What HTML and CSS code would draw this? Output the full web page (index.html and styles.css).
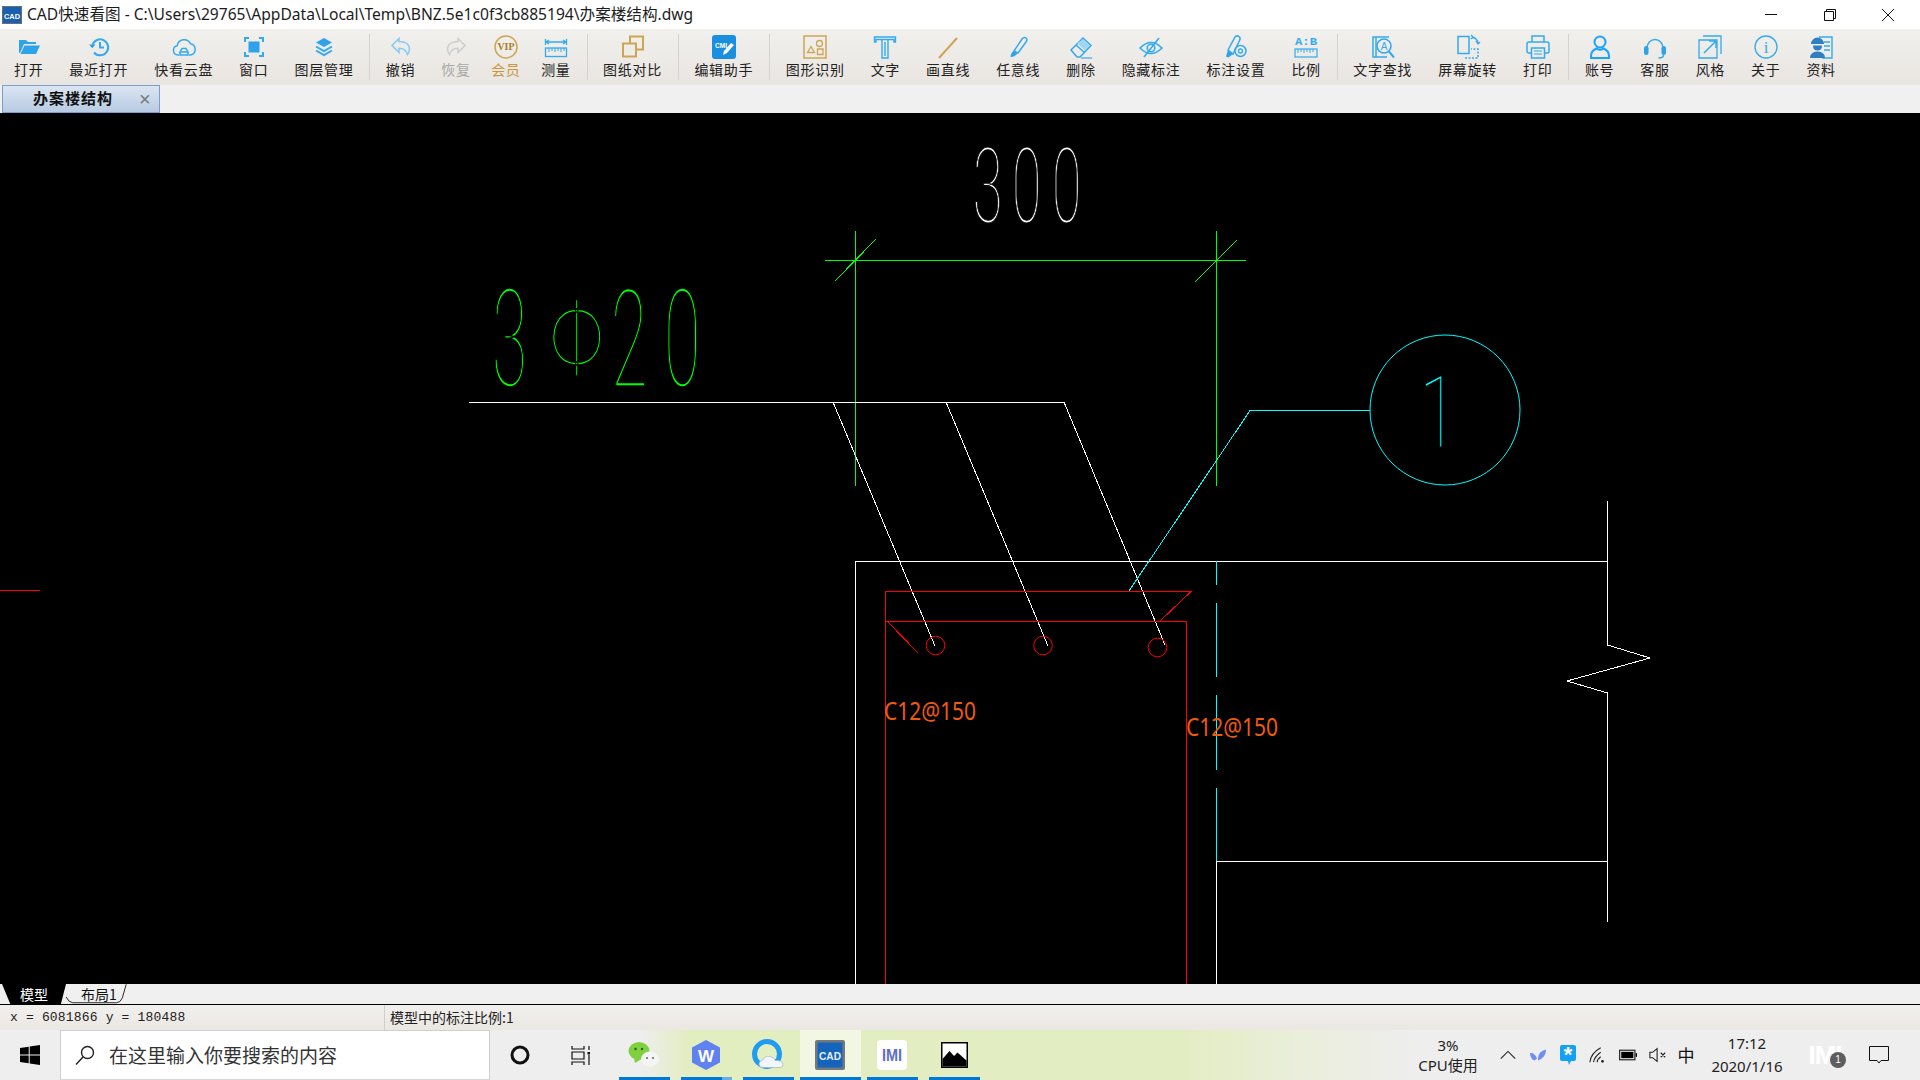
FILE: index.html
```html
<!DOCTYPE html>
<html lang="zh">
<head>
<meta charset="utf-8">
<title>CAD快速看图</title>
<link rel="stylesheet" href="styles.css">
</head>
<body>
<div class="app">
  <header class="titlebar">
    <svg class="app-icon" viewBox="0 0 20 18"><rect x="0.5" y="0.5" width="19" height="17" fill="#1b5fae" stroke="#66707c"/><text x="10" y="12.5" class="app-icon-t" textLength="16" lengthAdjust="spacingAndGlyphs">CAD</text></svg>
    <span class="title-text">CAD快速看图 - C:\Users\29765\AppData\Local\Temp\BNZ.5e1c0f3cb885194\办案楼结构.dwg</span>
    <div class="win-btns">
      <svg class="win-btn" viewBox="0 0 14 14"><path d="M1 6.5h12"/></svg>
      <svg class="win-btn" viewBox="0 0 14 14"><path d="M1.5 3.5h9v9h-9z M3.5 3.5v-2h9v9h-2"/></svg>
      <svg class="win-btn" viewBox="0 0 14 14"><path d="M1 1l12 12M13 1L1 13"/></svg>
    </div>
  </header>

  <nav class="toolbar">
    <div class="tool"><svg class="ic" viewBox="0 0 24 24"><path class="fb" d="M2 5h7l2 2h8v2H7L3 18H2z M7.5 10.5H23l-4 8.5H3.5z"/></svg><span>打开</span></div>
    <div class="tool"><svg class="ic" viewBox="0 0 24 24"><path d="M5.5 10A8 8 0 1 1 7 17.5 M13 7v5.5h4" stroke-width="2"/><path class="fb" d="M2 9.5h6.5l-3.2 3.8z"/></svg><span>最近打开</span></div>
    <div class="tool"><svg class="ic" viewBox="0 0 24 24"><path d="M7 20H6a4.7 4.7 0 0 1-.8-9.3A7 7 0 0 1 18.5 8.8 5.7 5.7 0 0 1 18.5 20H17 M8 20v-3l2-3.5h4l2 3.5v3z M8 17h8"/></svg><span>快看云盘</span></div>
    <div class="tool"><svg class="ic" viewBox="0 0 24 24"><path d="M3 7V3h4 M17 3h4v4 M21 17v4h-4 M7 21H3v-4" stroke-width="2"/><rect class="fb" x="6.5" y="6.5" width="11" height="11"/></svg><span>窗口</span></div>
    <div class="tool"><svg class="ic" viewBox="0 0 24 24"><path class="fb" d="M12 3l8 4.5-8 4.5-8-4.5z"/><path d="M4 11.5l8 4.5 8-4.5 M4 15.5l8 4.5 8-4.5" stroke-width="2"/></svg><span>图层管理</span></div>
    <i class="sep"></i>
    <div class="tool"><svg class="ic pale" viewBox="0 0 24 24"><path d="M10 3.5L3 10.5l7 7v-4.3c4 0 7 1 8.5 6.3 1.200-1.500 2-3.500 2-5.500 0-4.500-4-7.500-10.500-7.500z"/></svg><span>撤销</span></div>
    <div class="tool off"><svg class="ic grey" viewBox="0 0 24 24"><path d="M14 3.500L21 10.500l-7 7v-4.300c-4 0-7 1-8.500 6.300-1.200-1.500-2-3.500-2-5.500 0-4.500 4-7.500 10.500-7.500z"/></svg><span>恢复</span></div>
    <div class="tool vip"><svg class="ic gold" viewBox="0 0 24 24"><circle cx="12" cy="12" r="11" stroke-width="1.500"/><text x="12" y="15" class="vip-t" textLength="17" lengthAdjust="spacingAndGlyphs">VIP</text></svg><span>会员</span></div>
    <div class="tool after-vip"><svg class="ic" viewBox="0 0 24 24"><path d="M1.500 4v6 M22.500 4v6 M2 7h20 M5 5l-3 2 3 2 M19 5l3 2-3 2" stroke-width="1.300"/><rect x="1.500" y="13" width="21" height="8.500" stroke-width="1.300"/><path d="M5 13v4 M8 13v3 M11 13v4 M14 13v3 M17 13v4 M20 13v3" stroke-width="1"/></svg><span>测量</span></div>
    <i class="sep"></i>
    <div class="tool"><svg class="ic gold" viewBox="0 0 24 24"><rect x="9" y="1.500" width="13" height="13" stroke-width="2"/><rect class="mask" x="2" y="8.500" width="13" height="13" stroke-width="2"/></svg><span>图纸对比</span></div>
    <i class="sep"></i>
    <div class="tool"><svg class="ic" viewBox="0 0 24 24"><rect class="fb2" x="0" y="0" width="24" height="24" rx="3"/><text x="9" y="13" class="cmi-t" textLength="12" lengthAdjust="spacingAndGlyphs">CMI</text><path class="pen" d="M11 20l1-4 7-8 3 2-7 8z"/></svg><span>编辑助手</span></div>
    <i class="sep"></i>
    <div class="tool"><svg class="ic gold" viewBox="0 0 24 24"><rect x="1" y="1" width="22" height="22" stroke-width="1.500"/><path d="M4.500 17.500l3.500-6 3.500 6z M14.500 14h5.500v5.500h-5.500z" stroke-width="1.300"/><circle cx="16.500" cy="8.500" r="3" stroke-width="1.300"/></svg><span>图形识别</span></div>
    <div class="tool"><svg class="ic" viewBox="0 0 24 24"><path d="M1.500 2h21v5h-1.500v-2.500h-18v2.500h-1.500z M9 5v18h6v-18 M12 7v14" stroke-width="1.400"/></svg><span>文字</span></div>
    <div class="tool"><svg class="ic gold" viewBox="0 0 24 24"><path d="M3 23L21 3" stroke-width="2"/></svg><span>画直线</span></div>
    <div class="tool"><svg class="ic" viewBox="0 0 24 24"><path d="M8 16L16 4q2-2.500 4-1t0 4l-8 11z" stroke-width="1.500"/><path class="fb" d="M8 16q-3 1-3.500 6 4 0 7-3.500z"/></svg><span>任意线</span></div>
    <div class="tool"><svg class="ic" viewBox="0 0 24 24"><path d="M2 15L14 3l8 7.500L11 22H8z M7 10l9 8" stroke-width="1.500"/><path class="fb3" d="M14 4.500l6.500 6-4.500 5-8-7.500z"/><path d="M12 23h11" stroke-width="1.200"/></svg><span>删除</span></div>
    <div class="tool"><svg class="ic" viewBox="0 0 24 24"><path d="M1 13q11-11 22 0-11 11-22 0z" stroke-width="1.600"/><circle cx="12" cy="13" r="3.800" stroke-width="1.600"/><path d="M5 22L20 3" stroke-width="1.600"/></svg><span>隐藏标注</span></div>
    <div class="tool"><svg class="ic" viewBox="0 0 24 24"><path d="M4 15L11 2q2-2 4-.5t.5 4L9 19z" stroke-width="1.500"/><path class="fb" d="M4 15l5 4-4.500 3.500-2.500-1z"/><circle cx="16.500" cy="16" r="5.500" stroke-width="1.500"/><circle cx="16.500" cy="16" r="2" stroke-width="1.300"/></svg><span>标注设置</span></div>
    <div class="tool"><svg class="ic" viewBox="0 0 24 24"><text x="12" y="10" class="ab-t" textLength="22" lengthAdjust="spacingAndGlyphs">A:B</text><rect x="1" y="14" width="22" height="8" stroke-width="1.200"/><path d="M4 14v4 M7 14v3 M10 14v4 M13 14v3 M16 14v4 M19 14v3" stroke-width="1"/></svg><span>比例</span></div>
    <i class="sep"></i>
    <div class="tool"><svg class="ic" viewBox="0 0 24 24"><path d="M18 2H2v20h14 M5 2v20" stroke-width="1.500"/><circle class="mask" cx="13" cy="11" r="7" stroke-width="1.600"/><text x="13" y="14.500" class="a-t">A</text><path d="M18 16.500l5 6" stroke-width="2"/></svg><span>文字查找</span></div>
    <div class="tool"><svg class="ic" viewBox="0 0 24 24"><rect x="2" y="1.500" width="11" height="17" stroke-width="1.500"/><path d="M9 23h13v-9h-7" stroke-width="1.500" stroke-dasharray="2 1.500"/><path d="M16 2q5 1 6 6 M15 0l2 2-2 2 M20 6l2 3 2-2" stroke-width="1.300"/></svg><span>屏幕旋转</span></div>
    <div class="tool"><svg class="ic" viewBox="0 0 24 24"><path d="M6 7V1h12v6" stroke-width="1.500"/><path d="M5 18H3q-2 0-2-2V9q0-2 2-2h18q2 0 2 2v7q0 2-2 2h-2" stroke-width="1.500"/><rect x="5.500" y="13" width="13" height="10" stroke-width="1.500"/><path d="M8 16h8 M8 19h8" stroke-width="1.200"/></svg><span>打印</span></div>
    <i class="sep"></i>
    <div class="tool"><svg class="ic bright" viewBox="0 0 24 24"><circle cx="12" cy="7" r="5.500" stroke-width="2"/><path d="M3 23v-2c0-4 3-6.500 5.500-7.500 2 1.500 5 1.500 7 0 2.500 1 5.500 3.500 5.500 7.500v2z" stroke-width="2"/></svg><span>账号</span></div>
    <div class="tool"><svg class="ic" viewBox="0 0 24 24"><path d="M4 13a8 8.500 0 0 1 16 0" stroke-width="1.500"/><rect class="fb" x="1" y="11" width="4.500" height="9" rx="2.200"/><rect class="fb" x="18.500" y="11" width="4.500" height="9" rx="2.200"/><path d="M20.500 20q0 3-5 3" stroke-width="1.500"/></svg><span>客服</span></div>
    <div class="tool"><svg class="ic" viewBox="0 0 24 24"><path d="M5 1h18v18 M1 5h18v18H1z" stroke-width="1.300"/><path d="M6 18L18 6 M11 6h7v7" stroke-width="1.500"/></svg><span>风格</span></div>
    <div class="tool"><svg class="ic" viewBox="0 0 24 24"><circle cx="12" cy="12" r="11" stroke-width="1.300"/><text x="12" y="18" class="i-t">i</text></svg><span>关于</span></div>
    <div class="tool"><svg class="ic" viewBox="0 0 24 24"><path d="M10 2h13v21H13" stroke-width="1.400"/><path d="M15 7h6 M15 11h6 M15 15h6" stroke-width="1.400"/><path class="fb4" d="M2 9a6.500 6.500 0 0 1 13 0z M4 10.500h9q0 5-4.500 5T4 10.500z M1 23q0-6 7.500-6.500Q16 17 16 23z"/></svg><span>资料</span></div>
  </nav>

  <div class="tabstrip">
    <div class="doc-tab"><span class="doc-tab-name">办案楼结构</span><span class="doc-tab-x">×</span></div>
  </div>

  <main class="canvas">
    <svg class="drawing" viewBox="0 113 1920 871">
      <g class="c-green">
        <path d="M825 260.500H1246 M855.500 231V486 M1216.500 231V486 M876 239L835 281 M1237 240L1195 282"/>
      </g>
      <g class="c-white">
        <path d="M469 402.500H1064 M833 402L935 646 M946 402L1048 646 M1064 402L1165 645"/>
        <path d="M1607.500 561.500H855.500V984 M1607.500 501V645L1650 658L1567 681L1607.500 693V922 M1216.500 861.500H1607.500 M1216.500 861V984"/>
      </g>
      <g class="c-red">
        <path d="M885.500 984V591.500H1191L1160 621 M885.500 621.500H1186.500V984 M887 621L918 653 M0 590.500H40"/>
        <circle cx="935.500" cy="645.500" r="9.300"/><circle cx="1043" cy="645.500" r="9.300"/><circle cx="1157.500" cy="647.500" r="9.300"/>
      </g>
      <g class="c-cyan">
        <path d="M1129 591L1250 410.500H1370 M1216.500 561V585 M1216.500 603V677 M1216.500 695V770 M1216.500 788V861"/>
        <circle cx="1445" cy="410" r="75"/>
      </g>
      <text class="cad t-white" transform="translate(973 222) scale(.52 1)" x="0 75 152" font-size="103">300</text>
      <text class="cad big t-green" transform="translate(492 386) scale(.47 1)" font-size="136">3</text>
      <text class="cad big t-green" transform="translate(549 376) scale(.72 1)" font-size="108">Φ</text>
      <text class="cad big t-green" transform="translate(611 386) scale(.49 1)" x="0 108" font-size="136">20</text>
      <text class="cad t-cyan" transform="translate(1419 447) scale(.7 1)" font-size="101">1</text>
      <text class="note" x="884" y="720" font-size="26" textLength="92" lengthAdjust="spacingAndGlyphs">C12@150</text>
      <text class="note" x="1186" y="736" font-size="26" textLength="92" lengthAdjust="spacingAndGlyphs">C12@150</text>
    </svg>
  </main>

  <div class="sheets">
    <div class="sheet sheet-on"><span>模型</span></div>
    <div class="sheet sheet-off">
      <svg class="sheet-edge" viewBox="0 0 70 20"><path d="M0 13Q3 19 7 19H52Q56 19 58 14L62 0"/></svg>
      <span>布局1</span>
    </div>
  </div>

  <div class="statusbar">
    <span class="coords">x = 6081866 y = 180488</span>
    <span class="scale">模型中的标注比例:1</span>
  </div>

  <footer class="taskbar">
    <div class="start"><svg class="start-logo" viewBox="0 0 20 20"><path d="M0 3l8.700-1.300v7.800H0z M9.700 1.500L20 0v9.500H9.700z M0 10.500h8.700v7.800L0 17z M9.700 10.500H20V20L9.700 18.500z"/></svg></div>
    <div class="search">
      <svg class="search-ic" viewBox="0 0 20 20"><circle cx="12.500" cy="7.500" r="6"/><path d="M8 12L1 19.500"/></svg>
      <span>在这里输入你要搜索的内容</span>
    </div>
    <div class="tb-btn"><svg class="cortana" viewBox="0 0 20 20"><circle cx="10" cy="10" r="8"/></svg></div>
    <div class="tb-btn"><svg class="taskview" viewBox="0 0 20 19"><path d="M2 0v3h12V0 M2 6h12v7H2z M2 19v-3h12v3 M19 0v4 M19 9v10"/><rect class="tv-dot" x="17.500" y="6" width="3" height="2.500"/></svg></div>
    <div class="apps">
      <div class="app-slot"><svg class="app-ic" viewBox="0 0 32 32"><ellipse cx="11" cy="12" rx="10.500" ry="9" fill="#7fd03e"/><path d="M6 19l1 5 5-3z" fill="#7fd03e"/><circle cx="7.500" cy="10" r="1.200" fill="#2c5e10"/><circle cx="14" cy="10" r="1.200" fill="#2c5e10"/><ellipse cx="22" cy="20" rx="9" ry="7.500" fill="#f4f4f4"/><circle cx="19" cy="19" r="1" fill="#666"/><circle cx="25" cy="19" r="1" fill="#666"/></svg></div>
      <div class="app-slot slot-split"><svg class="app-ic" viewBox="0 0 32 32"><path d="M16 1l14 7.500v15L16 31 2 23.500v-15z" fill="#5f82f0"/><text x="16" y="22.500" class="wps-t">W</text></svg></div>
      <div class="app-slot"><svg class="app-ic" viewBox="0 0 32 32"><circle cx="15" cy="15" r="12.500" fill="none" stroke="#1f9bf0" stroke-width="5"/><path d="M11 29q-4 0-4-3.500 0-3 3.500-3.500 2-5 7.500-4 4 .5 5 4 7-.5 8 3.500.5 3.500-3 3.500z" fill="#f2f6fa" stroke="#9fb6c6" stroke-width=".7" transform="translate(0 -0.500)"/></svg></div>
      <div class="app-slot slot-active"><svg class="app-ic app-cad" viewBox="0 0 30 30"><rect x="0" y="0" width="30" height="30" rx="2" fill="#76797c"/><rect x="2.500" y="2.500" width="25" height="25" fill="#1464bb"/><text x="15" y="19.500" class="cad-t" textLength="22" lengthAdjust="spacingAndGlyphs">CAD</text></svg></div>
      <div class="app-slot"><svg class="app-ic app-cad" viewBox="0 0 30 30"><rect width="30" height="30" rx="4" fill="#fff"/><text x="15" y="21" class="imi-t" textLength="20" lengthAdjust="spacingAndGlyphs">IMI</text></svg></div>
      <div class="app-slot"><svg class="app-ic app-pic" viewBox="0 0 27 26"><rect width="27" height="26" fill="#000"/><rect x="1.500" y="1.500" width="24" height="23" fill="#fff"/><path d="M1.500 24.500V17l7-8 4.500 5 3.500-3.500 9 8v6z" fill="#000"/></svg></div>
    </div>
    <div class="tray">
      <div class="cpu"><span>3%</span><span>CPU使用</span></div>
      <div class="tray-cell caret-cell"><svg class="tray-ic" viewBox="0 0 20 20"><path d="M2 14l8-8 8 8"/></svg></div>
      <div class="tray-cell"><svg class="tray-ic" viewBox="0 0 20 20"><path d="M1 8q5-1 8 6l-3 2Q2 15 1 8z M10 14Q10 6 19 4q0 9-9 12z" fill="#6e8ff0" stroke="none"/></svg></div>
      <div class="tray-cell"><svg class="tray-ic tall" viewBox="0 0 16 20"><path d="M2 0h12q2 0 2 2v12q0 2-2 2h-3l-2 4-1-4H2q-2 0-2-2V2q0-2 2-2z" fill="#14a0f5" stroke="none"/><text x="8" y="17" class="star-t">*</text></svg></div>
      <div class="tray-cell"><svg class="tray-ic" viewBox="0 0 20 20"><path d="M1 18Q2 8 13 2 M5 18Q6 12 13 7 M9 18Q9 15 13 12"/><circle cx="15" cy="17" r="1.500" fill="#222" stroke="none"/></svg></div>
      <div class="tray-cell"><svg class="tray-ic" viewBox="0 0 20 12"><rect x=".7" y=".7" width="17" height="10.600" stroke-width="1.300"/><rect x="2.500" y="2.500" width="13.500" height="7" fill="#000" stroke="none"/><rect x="18.500" y="4" width="1.500" height="4" fill="#000" stroke="none"/></svg></div>
      <div class="tray-cell"><svg class="tray-ic" viewBox="0 0 20 16"><path d="M1 5h3l5-4v14l-5-4H1z M13 5.500l5 5 M18 5.500l-5 5"/></svg></div>
      <div class="tray-cell ime">中</div>
      <div class="clock"><span>17:12</span><span>2020/1/16</span></div>
      <div class="imi-tray"><span class="imi-w">IMI</span><span class="imi-badge">1</span></div>
      <div class="notify"><svg class="notify-ic" viewBox="0 0 20 19"><path d="M.5.500h19v14h-7.500l-2 2.500-2-2.500H.5z"/></svg></div>
    </div>
  </footer>
</div>
</body>
</html>
```
FILE: styles.css
```css
* { box-sizing: border-box; }
html, body { margin: 0; height: 100%; overflow: hidden; }
body { font-family: "Noto Sans", "Noto Sans CJK SC", sans-serif; color: #222; background: #f0f0f0; }
.app { display: flex; flex-direction: column; width: 1920px; height: 1080px; }

/* title */
.titlebar { height: 29px; background: #fff; display: flex; align-items: center; padding-left: 2px; flex: none; }
.app-icon { width: 20px; height: 18px; flex: none; }
.app-icon-t { font: bold 8px "Liberation Sans", sans-serif; fill: #fff; text-anchor: middle; }
.title-text { margin-left: 5px; font: 15.600px/29px "Noto Sans", "Noto Sans CJK SC", sans-serif; color: #1c1c1c; white-space: nowrap; }
.win-btns { margin-left: auto; display: flex; padding-right: 25px; gap: 44.500px; }
.win-btn { width: 14px; height: 14px; fill: none; stroke: #111; stroke-width: 1; }

/* toolbar */
.toolbar { height: 56px; flex: none; display: flex; align-items: flex-start; padding-left: 1px; background: linear-gradient(#f1f0ed, #e9e5e1); }
.tool { display: flex; flex-direction: column; align-items: center; padding: 6px 12.950px 0; }
.tool span { font: 14px/20px "Noto Sans CJK SC", sans-serif; letter-spacing: .75px; white-space: nowrap; color: #222; }
.tool.off span { color: #a9a9a9; }
.tool.vip { padding: 6px 7.500px 0; }
.tool.vip span { color: #c8963e; }
.tool.after-vip { padding-left: 13px; }
.sep { width: 1px; height: 46px; margin: 5px 2.500px 0 3px; background: #d4d3d0; flex: none; }

.ic { width: 24px; height: 24px; fill: none; stroke: #33aaee; stroke-width: 1.500; display: block; overflow: visible; }
.ic .fb { fill: #2ea2ea; stroke: none; }
.ic .fb2 { fill: #1a8fe0; stroke: none; }
.ic .fb3 { fill: #9fd6f6; stroke: none; }
.ic .fb4 { fill: #2f7fc4; stroke: none; }
.ic .pen { fill: #fff; stroke: none; }
.ic .mask { fill: #eeecea; }
.ic.pale { stroke: #86c8f2; }
.ic.grey { stroke: #cccccc; }
.ic.gold { stroke: #cda653; }
.ic.bright { stroke: #18a4ff; }
.vip-t { font: bold 9.500px "Liberation Serif", serif; fill: #a97c22; stroke: none; text-anchor: middle; }
.cmi-t { font: bold 6.500px "Liberation Sans", sans-serif; fill: #fff; stroke: none; text-anchor: middle; }
.ab-t { font: bold 11px "Liberation Mono", monospace; fill: #33aaee; stroke: none; text-anchor: middle; }
.a-t { font: 10px "Liberation Sans", sans-serif; fill: #33aaee; stroke: none; text-anchor: middle; }
.i-t { font: 17px "Liberation Serif", serif; fill: #33aaee; stroke: none; text-anchor: middle; }

/* tabs */
.tabstrip { height: 28px; flex: none; background: #f0f0f0; padding-left: 2px; }
.doc-tab { width: 158px; height: 28px; display: flex; align-items: center; border: 1px solid #7d9ccb; background: linear-gradient(#dbe5f2, #b7cbe3); }
.doc-tab-name { margin: -2px 0 0 30px; font: bold 15px/24px "Noto Sans CJK SC", sans-serif; letter-spacing: 1px; color: #111; white-space: nowrap; }
.doc-tab-x { margin-left: 26px; font: 20px/24px "Liberation Sans", sans-serif; color: #777; }

/* canvas */
.canvas { height: 871px; flex: none; background: #000; overflow: hidden; }
.drawing { display: block; width: 1920px; height: 871px; }
.drawing path, .drawing circle { fill: none; stroke-width: 1; }
.drawing path { shape-rendering: crispEdges; }
.c-green { stroke: #00ff00; }
.c-white { stroke: #ffffff; }
.c-red { stroke: #ff0000; }
.c-cyan { stroke: #00ffff; }
.cad { font-family: Roboto, sans-serif; font-weight: 100; stroke: #000; stroke-width: 1; }
.cad.big { stroke-width: 1.600; }
.t-white { fill: #fff; }
.t-green { fill: #00ff00; }
.t-cyan { fill: #00ffff; }
.note { font-family: "Noto Sans", sans-serif; font-weight: 400; fill: #ee5a0e; }

/* sheets */
.sheets { height: 21px; flex: none; display: flex; background: #f0f0f0; border-bottom: 1px solid #000; padding-left: 2px; }
.sheet { height: 20px; font: 14px/21px "Noto Sans CJK SC", sans-serif; position: relative; }
.sheet-on { width: 64px; background: #000; color: #fff; clip-path: polygon(0 0, 100% 0, 92% 100%, 13% 100%); padding-left: 18px; }
.sheet-off { width: 68px; padding-left: 15px; color: #111; white-space: nowrap; }
.sheet-off span { position: relative; }
.sheet-edge { position: absolute; left: 0; top: 0; width: 68px; height: 20px; fill: none; stroke: #222; stroke-width: 1; }

/* status */
.statusbar { height: 25px; flex: none; display: flex; align-items: center; background: linear-gradient(#f1f0ed, #ebe7e3); }
.coords { width: 385px; padding-left: 10px; font: 13px/25px "Liberation Mono", monospace; letter-spacing: .17px; color: #222; border-right: 1px solid #d0cfcc; white-space: nowrap; }
.scale { padding-left: 5px; font: 14px/23px "Noto Sans CJK SC", sans-serif; color: #222; }

/* taskbar */
.taskbar { height: 50px; flex: none; display: flex; align-items: stretch; background: linear-gradient(90deg, #eeeeee 0, #eeeeee 640px, #e2edc0 690px, #e3edc2 1180px, #eaeedb 1300px, #eeeeee 1420px); }
.start { width: 60px; display: flex; align-items: center; justify-content: center; }
.start-logo { width: 20px; height: 20px; fill: #000; }
.search { width: 430px; background: #fff; border: 1px solid #d0d0d0; border-bottom-color: #d8d8d8; display: flex; align-items: center; padding-left: 14px; }
.search-ic { width: 20px; height: 20px; fill: none; stroke: #222; stroke-width: 1.400; flex: none; }
.search span { margin-left: 14px; font: 19px/48px "Noto Sans CJK SC", sans-serif; color: #333; white-space: nowrap; }
.tb-btn { width: 60px; display: flex; align-items: center; justify-content: center; }
.cortana { width: 20px; height: 20px; fill: none; stroke: #111; stroke-width: 3; }
.taskview { width: 20px; height: 19px; fill: none; stroke: #111; stroke-width: 1.200; }
.tv-dot { fill: #111; stroke: none; }
.apps { display: flex; margin-left: 3px; }
.app-slot { width: 62px; display: flex; align-items: center; justify-content: center; position: relative; }
.app-slot::after { content: ""; position: absolute; left: 6px; right: 5px; bottom: 0; height: 3px; background: #0078d7; }
.slot-split::after { background: linear-gradient(90deg, #0078d7 80%, #66aee7 80%); }
.slot-active { background: linear-gradient(90deg, transparent 1px, #f2f7e4 1px); }
.slot-active::after { left: 1px; right: 0; }
.app-ic { width: 32px; height: 32px; }
.app-cad { width: 30px; height: 30px; }
.app-pic { width: 27px; height: 26px; }
.wps-t { font: bold 17px "Liberation Sans", sans-serif; fill: #fff; text-anchor: middle; }
.cad-t { font: bold 10px "Liberation Sans", sans-serif; fill: #e8eef8; text-anchor: middle; }
.imi-t { font: bold 16px "Liberation Sans", sans-serif; fill: #5a6fc0; text-anchor: middle; }

.tray { margin-left: auto; display: flex; align-items: center; padding-right: 23px; }
.cpu { width: 70px; display: flex; flex-direction: column; align-items: center; font: 15px/20px "Noto Sans", "Noto Sans CJK SC", sans-serif; color: #222; margin-right: 10px; }
.tray-cell { width: 30px; display: flex; align-items: center; justify-content: center; }
.tray-ic { width: 18px; height: 18px; fill: none; stroke: #222; stroke-width: 1.200; overflow: visible; }
.tray-ic.tall { width: 16px; height: 20px; }
.star-t { font: bold 22px "Liberation Sans", sans-serif; fill: #fff; text-anchor: middle; stroke: none; }
.ime { font: 17px/24px "Noto Sans CJK SC", sans-serif; color: #111; margin-left: -2px; margin-right: 4px; }
.clock { width: 84px; display: flex; flex-direction: column; align-items: center; font: 15px/23px "Noto Sans", sans-serif; color: #222; }
.imi-tray { width: 72px; position: relative; height: 26px; display: flex; align-items: center; justify-content: center; }
.imi-w { font: bold 26px/26px "Liberation Sans", sans-serif; color: #fff; letter-spacing: -1px; }
.imi-badge { position: absolute; left: 41px; top: 10px; width: 16px; height: 16px; border-radius: 50%; background: #5d5d5d; color: #fff; font: 10px/16px "Liberation Sans", sans-serif; text-align: center; }
.notify { width: 36px; display: flex; justify-content: center; }
.notify-ic { width: 20px; height: 19px; fill: none; stroke: #111; stroke-width: 1; }
```
